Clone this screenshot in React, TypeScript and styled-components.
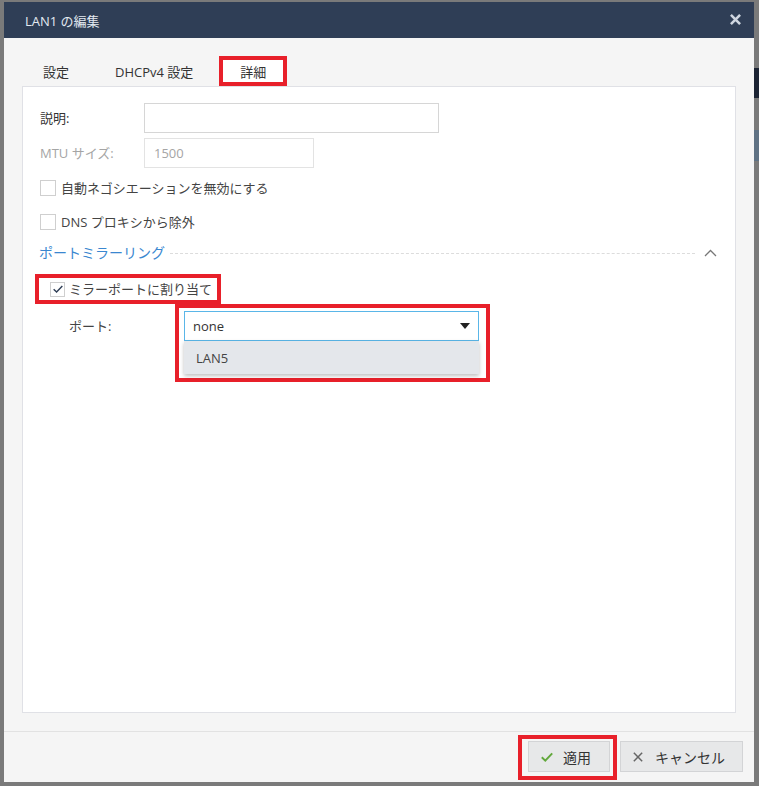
import styled, { createGlobalStyle } from "styled-components";

const GlobalStyle = createGlobalStyle`
  html, body {
    margin: 0;
    padding: 0;
  }
  body {
    width: 759px;
    height: 786px;
    overflow: hidden;
    background-color: #7a7a7a;
    background-image: linear-gradient(
      to bottom,
      transparent 68px,
      #1c2434 68px,
      #1c2434 98px,
      transparent 98px,
      transparent 130px,
      #5f7284 130px,
      #5f7284 161px,
      transparent 161px
    );
    background-size: 5px 100%;
    background-position: right top;
    background-repeat: no-repeat;
    font-family: "Open Sans", "Noto Sans CJK JP", sans-serif;
    font-size: 13px;
    color: #333;
  }
`;

const Dialog = styled.div`
  margin: 2px 0 0 4px;
  width: 750px;
  height: 780px;
  background: #f5f5f5;
  display: flex;
  flex-direction: column;
`;

const Header = styled.div`
  height: 36px;
  flex-shrink: 0;
  background: #2f3e56;
  display: flex;
  align-items: center;
  justify-content: space-between;
  padding: 0 12px 0 21px;
  color: #e3e9f1;
`;

const Title = styled.div`
  font-size: 13px;
`;

const CloseButton = styled.button`
  border: none;
  background: none;
  padding: 0;
  width: 12px;
  height: 12px;
  display: flex;
  cursor: pointer;
`;

const Body = styled.div`
  flex: 1;
  display: flex;
  flex-direction: column;
  padding: 18px 18px 18px 18px;
`;

const TabBar = styled.div`
  display: flex;
  align-items: stretch;
  height: 30px;
  padding-left: 21px;
`;

const Tab = styled.div<{ $gap: number }>`
  display: flex;
  align-items: center;
  margin-right: ${(p) => p.$gap}px;
  color: #333;
  white-space: nowrap;
`;

const ActiveTab = styled.div`
  display: flex;
  align-items: center;
  justify-content: center;
  width: 60px;
  background: #fff;
  border: 4px solid #e8202a;
  color: #333;
`;

const Panel = styled.div`
  flex: 1;
  background: #fff;
  border: 1px solid #e0e1e6;
  padding: 16px 18px 0 17px;
  display: flex;
  flex-direction: column;
`;

const FieldRow = styled.div<{ $mt?: number }>`
  display: flex;
  align-items: center;
  margin-top: ${(p) => p.$mt ?? 0}px;
`;

const Label = styled.div<{ $muted?: boolean }>`
  width: 104px;
  line-height: 18px;
  color: ${(p) => (p.$muted ? "#a5a5a5" : "#333")};
`;

const TextInput = styled.input<{ $w: number }>`
  box-sizing: border-box;
  width: ${(p) => p.$w}px;
  height: 30px;
  border: 1px solid #d6d6d6;
  padding: 0 9px;
  font: inherit;
  color: #333;
  outline: none;
  &:disabled {
    background: #fff;
    border-color: #e3e3e3;
    color: #a5a5a5;
  }
`;

const CheckRow = styled.label<{ $mt: number }>`
  display: flex;
  align-items: center;
  gap: 5px;
  height: 16px;
  line-height: 16px;
  margin-top: ${(p) => p.$mt}px;
  color: #444;
`;

const Box = styled.span<{ $size: number }>`
  box-sizing: border-box;
  width: ${(p) => p.$size}px;
  height: ${(p) => p.$size}px;
  border: 1px solid #cfcfcf;
  background: #fff;
  display: flex;
  align-items: center;
  justify-content: center;
  flex-shrink: 0;
`;

const SectionHeader = styled.div`
  display: flex;
  align-items: center;
  margin-top: 13px;
  height: 20px;
  line-height: 20px;
  margin-left: -1px;
`;

const SectionTitle = styled.div`
  color: #3a87d0;
  font-size: 14px;
  white-space: nowrap;
`;

const DashLine = styled.div`
  flex: 1;
  margin: 0 9px 0 5px;
  border-top: 1px dashed #dcdcdc;
`;

const Highlight = styled.div`
  border: 4px solid #e8202a;
`;

const MirrorCheck = styled(Highlight)`
  align-self: flex-start;
  margin-top: 11px;
  margin-left: -5px;
  height: 22px;
  line-height: 22px;
  display: flex;
  align-items: center;
  gap: 4px;
  padding: 0 5px 0 11px;
  color: #444;
`;

const PortRow = styled.div`
  display: flex;
  align-items: flex-start;
  margin-left: 29px;
`;

const PortLabel = styled.div`
  width: 106px;
  line-height: 30px;
  margin-top: 7px;
  color: #444;
`;

const SelectWrap = styled(Highlight)`
  padding: 3px 7px 4px 5px;
`;

const SelectBox = styled.div`
  box-sizing: border-box;
  width: 295px;
  height: 30px;
  border: 1px solid #5ab6e8;
  display: flex;
  align-items: center;
  justify-content: space-between;
  padding: 0 8px 0 8px;
  color: #333;
  background: #fff;
`;

const Caret = styled.span`
  width: 0;
  height: 0;
  border-left: 5px solid transparent;
  border-right: 5px solid transparent;
  border-top: 6px solid #222;
`;

const Option = styled.div`
  box-sizing: border-box;
  width: 295px;
  height: 33px;
  background: #e4e7eb;
  box-shadow: 0 2px 4px rgba(0, 0, 0, 0.25);
  display: flex;
  align-items: center;
  padding-left: 12px;
  color: #444;
`;

const Footer = styled.div`
  box-sizing: border-box;
  height: 51px;
  flex-shrink: 0;
  border-top: 1px solid #e2e2e2;
  display: flex;
  justify-content: flex-end;
  align-items: flex-start;
  padding: 3px 11px 0 0;
`;

const ApplyWrap = styled(Highlight)`
  padding: 2px 3px 4px 6px;
  margin-right: 3px;
`;

const Button = styled.button<{ $w: number; $pl: number; $gap: number; $mt?: number }>`
  box-sizing: border-box;
  width: ${(p) => p.$w}px;
  height: 31px;
  margin-top: ${(p) => p.$mt ?? 0}px;
  background: #e7e8e9;
  border: 1px solid #d3d4d6;
  display: flex;
  align-items: center;
  justify-content: flex-start;
  gap: ${(p) => p.$gap}px;
  padding: 0 0 0 ${(p) => p.$pl}px;
  font: inherit;
  font-size: 14px;
  color: #333;
  cursor: pointer;
`;

const Spacer = styled.div<{ $h: number }>`
  height: ${(p) => p.$h}px;
`;

const CheckMark = ({ color, size, width }: { color: string; size: number; width: number }) => (
  <svg width={size} height={size} viewBox="0 0 12 12" style={{ flexShrink: 0 }}>
    <path d="M0.8 6.2 L4.3 9.6 L11.2 2.4" fill="none" stroke={color} strokeWidth={width} />
  </svg>
);

const Cross = ({ color, size, width }: { color: string; size: number; width: number }) => (
  <svg width={size} height={size} viewBox="0 0 12 12" style={{ flexShrink: 0 }}>
    <path d="M1 1 L11 11 M11 1 L1 11" stroke={color} strokeWidth={width} />
  </svg>
);

const Chevron = () => (
  <svg width="13" height="8" viewBox="0 0 13 8">
    <path d="M1 7 L6.5 1.5 L12 7" fill="none" stroke="#777" strokeWidth="1.3" />
  </svg>
);

const App: React.FC = () => {
  return (
    <>
      <GlobalStyle />
      <Dialog>
        <Header>
          <Title>LAN1 の編集</Title>
          <CloseButton>
            <Cross color="#cfd6e0" size={11} width={2.8} />
          </CloseButton>
        </Header>
        <Body>
          <TabBar>
            <Tab $gap={46}>設定</Tab>
            <Tab $gap={26}>DHCPv4 設定</Tab>
            <ActiveTab>詳細</ActiveTab>
          </TabBar>
          <Panel>
            <FieldRow>
              <Label>説明:</Label>
              <TextInput $w={295} />
            </FieldRow>
            <FieldRow $mt={5}>
              <Label $muted>MTU サイズ:</Label>
              <TextInput $w={170} value="1500" disabled readOnly />
            </FieldRow>
            <CheckRow $mt={12}>
              <Box $size={16} />
              自動ネゴシエーションを無効にする
            </CheckRow>
            <CheckRow $mt={18}>
              <Box $size={16} />
              DNS プロキシから除外
            </CheckRow>
            <SectionHeader>
              <SectionTitle>ポートミラーリング</SectionTitle>
              <DashLine />
              <Chevron />
            </SectionHeader>
            <MirrorCheck>
              <Box $size={15}>
                <CheckMark color="#2f3e56" size={10} width={1.7} />
              </Box>
              ミラーポートに割り当て
            </MirrorCheck>
            <PortRow>
              <PortLabel>ポート:</PortLabel>
              <SelectWrap>
                <SelectBox>
                  none
                  <Caret />
                </SelectBox>
                <Option>LAN5</Option>
              </SelectWrap>
            </PortRow>
            <Spacer $h={0} />
          </Panel>
        </Body>
        <Footer>
          <ApplyWrap>
            <Button $w={82} $pl={12} $gap={10}>
              <CheckMark color="#62a83c" size={12} width={2} />
              適用
            </Button>
          </ApplyWrap>
          <Button $w={123} $pl={12} $gap={12} $mt={6}>
            <Cross color="#666" size={10} width={1.8} />
            キャンセル
          </Button>
        </Footer>
      </Dialog>
    </>
  );
};

export default App;
